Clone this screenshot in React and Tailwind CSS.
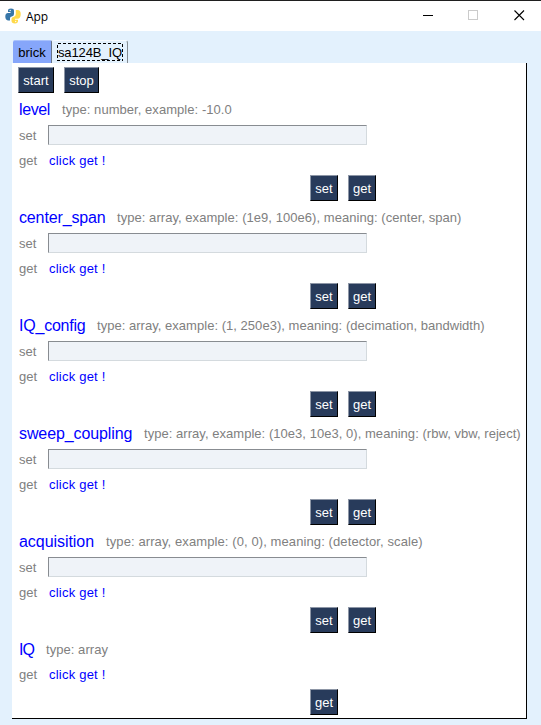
import React from "react";

const groups = [
  { name: "level", nameWidth: "w-[43px] tracking-[-0.4px]", info: "type: number, example: -10.0" },
  { name: "center_span", nameWidth: "w-[98px] tracking-[-0.14px]", info: "type: array, example: (1e9, 100e6), meaning: (center, span)" },
  { name: "IQ_config", nameWidth: "w-[78px] tracking-[-0.22px]", info: "type: array, example: (1, 250e3), meaning: (decimation, bandwidth)", infoTracking: "tracking-[0.03px]" },
  { name: "sweep_coupling", nameWidth: "w-[125px] tracking-[-0.1px]", info: "type: array, example: (10e3, 10e3, 0), meaning: (rbw, vbw, reject)", infoTracking: "tracking-[0.04px]" },
  { name: "acquisition", nameWidth: "w-[87px] tracking-[-0.05px]", info: "type: array, example: (0, 0), meaning: (detector, scale)", infoTracking: "tracking-[0.1px]" },
  { name: "IQ", nameWidth: "w-[27px] tracking-[-1px]", info: "type: array", readOnly: true },
];

function Button({ children, width = "w-7" }) {
  return (
    <button className={`${width} flex h-[26px] shrink-0 items-center justify-center border border-t-[#8d96a6] border-l-[#8d96a6] border-r-black border-b-black bg-[#283b5b] pt-px text-[13px] leading-none text-white`}>
      {children}
    </button>
  );
}

function Group({ name, nameWidth, info, infoTracking = "tracking-[0.05px]", readOnly }) {
  return (
    <section className={readOnly ? "h-[82px]" : "h-[108px]"}>
      <div className="flex h-[25px] items-center pl-[7px] whitespace-nowrap">
        <span className={`${nameWidth} shrink-0 text-base leading-[18px] text-[#0000ff]`}>{name}</span>
        <span className={`${infoTracking} text-[13px] leading-[18px] text-[#808080]`}>{info}</span>
      </div>
      {!readOnly && (
        <div className="flex h-[26px] items-center pl-[7px]">
          <span className="w-[29px] pt-0.5 text-[13px] leading-[18px] text-[#808080]">set</span>
          <input className="h-5 w-[319px] border border-t-[#888c91] border-l-[#888c91] border-r-[#d4dade] border-b-[#d4dade] bg-[#eff3f8] px-1 text-[13px] outline-none" />
        </div>
      )}
      <div className="flex h-[25px] items-center pl-[7px] text-[13px] whitespace-nowrap">
        <span className="w-[30px] text-[#808080]">get</span>
        <span className="tracking-[0.22px] text-[#0000ff]">click get !</span>
      </div>
      <div className="flex gap-2.5 pt-[2px] pl-[298px]">
        {!readOnly && <Button>set</Button>}
        <Button>get</Button>
      </div>
    </section>
  );
}

function AppIcon() {
  return (
    <svg width="16" height="16" viewBox="0 0 16 16" className="shrink-0">
      <path d="M3 3Q3 .6 6 .6Q9 .6 9 3V6Q9 8.4 6.8 8.5Q5 8.6 5 10.5V12.5H3Q.3 12 .3 8.5Q.3 5 3 4.9H5.5V4H3Z" fill="#3776a8" />
      <path d="M13 12.8Q13 15.4 10 15.4Q6.5 15.4 6.5 12.8V10.8Q6.5 9 9 8.7Q10.8 8.4 10.8 6V2H12.5Q15.7 2 15.7 6Q15.7 10.5 12.5 10.8H10V11.8H13Z" fill="#ffd94a" />
      <circle cx="5.2" cy="2.5" r=".65" fill="#fff" />
      <circle cx="10.7" cy="13.5" r=".65" fill="#fff" />
    </svg>
  );
}

export default function App() {
  return (
    <div className="flex h-[725px] w-[541px] flex-col overflow-hidden bg-[#e3f1fd] font-['Liberation_Sans',Arial,sans-serif]">
      <header className="flex h-[31px] shrink-0 items-center border-t border-[#1f1f1f] bg-white pl-[5px]">
        <AppIcon />
        <span className="pt-px pl-[5px] font-['Open_Sans','Noto_Sans',sans-serif] text-xs leading-none tracking-[-0.1px] text-black">App</span>
        <svg width="118" height="30" className="ml-auto" shapeRendering="crispEdges">
          <path d="M0 14.5H10" stroke="#000" />
          <rect x="45.5" y="9.5" width="9" height="9" fill="none" stroke="#cbcbcb" />
          <path d="M91.5 9.5L101 19M101 9.5L91.5 19" stroke="#000" strokeWidth="1.1" shapeRendering="auto" />
        </svg>
      </header>
      <nav className="flex h-8 shrink-0 items-end pl-[13px] text-[13px] leading-none text-black">
        <div className="flex h-[23px] w-[39px] items-center justify-center rounded-t-[2px] border-t border-r border-t-[#a9c2fc] border-r-[#667386] bg-[#86a6fa] pt-px">brick</div>
        <div className="flex h-[23px] w-[76px] items-start rounded-t-[3px] border-t border-r border-t-[#f7fbff] border-r-[#848b91] bg-[#e3f1fd] pt-[2px] pl-[5px]">
          <svg width="66" height="18" className="shrink-0 overflow-visible" shapeRendering="crispEdges">
            <rect x=".5" y=".5" width="65" height="17" fill="none" stroke="#000" strokeDasharray="3 2" />
            <text x="1" y="14" fontSize="13" textLength="64" lengthAdjust="spacing">sa124B_IQ</text>
          </svg>
        </div>
      </nav>
      <main className="ml-3 h-[656px] w-[515px] shrink-0 border-r border-b border-black bg-white">
        <div className="flex h-[34px] gap-2.5 pt-1 pl-1.5">
          <Button width="w-9">start</Button>
          <Button width="w-[35px]">stop</Button>
        </div>
        {groups.map((group) => <Group key={group.name} {...group} />)}
      </main>
    </div>
  );
}
